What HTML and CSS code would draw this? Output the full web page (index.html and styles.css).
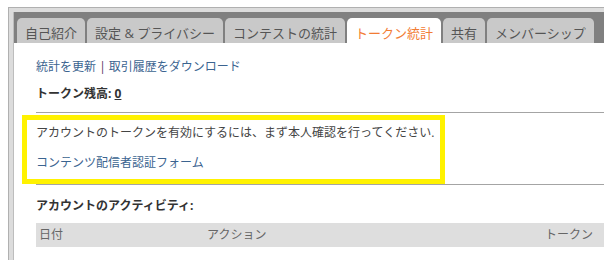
FILE: index.html
```html
<!DOCTYPE html>
<html lang="ja">
<head>
<meta charset="utf-8">
<link rel="stylesheet" href="styles.css">
</head>
<body>
<div class="frame">
  <div class="panel">
    <div class="tabbar">
      <div class="tab">自己紹介</div>
      <div class="tab">設定 &amp; プライバシー</div>
      <div class="tab">コンテストの統計</div>
      <div class="tab active">トークン統計</div>
      <div class="tab">共有</div>
      <div class="tab">メンバーシップ</div>
    </div>
    <div class="content">
      <div class="links"><a href="#">統計を更新</a> <span class="sep">|</span> <a href="#">取引履歴をダウンロード</a></div>
      <div class="balance">トークン残高: <a href="#" class="num">0</a></div>
      <div class="notice">
        <div class="hl">
          <p class="msg">アカウントのトークンを有効にするには、まず本人確認を行ってください.</p>
          <p class="msg gap"><a href="#">コンテンツ配信者認証フォーム</a></p>
        </div>
      </div>
      <div class="activity">アカウントのアクティビティ:</div>
      <div class="thead">
        <div class="th">日付</div>
        <div class="th">アクション</div>
        <div class="th">トークン</div>
      </div>
    </div>
  </div>
</div>
</body>
</html>
```

FILE: styles.css
```css
html, body {
  margin: 0;
  padding: 0;
  background: #fff;
  overflow: hidden;
}
body {
  padding: 7px 0 0 8px;
  font-family: "Open Sans", "Noto Sans CJK JP", sans-serif;
  color: #444;
  width: 596px;
  height: 253px;
}
.frame {
  box-sizing: border-box;
  width: 596px;
  height: 253px;
  border: 1px solid #b0b0b0;
  border-right: none;
  border-bottom: none;
  background: #dcdcdc;
  padding: 4px 0 0 4px;
}
.panel {
  background: #fff;
  height: 100%;
  border-left: 1px solid #bdbdbd;
}
.tabbar {
  display: flex;
  gap: 2px;
  background: #808080;
  padding: 6px 0 0 3px;
  height: 25px;
}
.tab {
  background: #c9c9c9;
  color: #555;
  font-size: 13px;
  line-height: 18px;
  padding: 6px 8px 1px;
  border-radius: 5px 5px 0 0;
  white-space: nowrap;
}
.tab.active {
  background: #fff;
  color: #f27c34;
}
.content {
  padding: 15px 0 0 22px;
  font-size: 12px;
  line-height: 18px;
}
a {
  color: #3b6490;
  text-decoration: none;
}
.sep {
  color: #5b2f63;
}
.balance {
  margin-top: 9px;
  font-weight: bold;
  color: #333;
}
.balance .num {
  color: #333;
  text-decoration: underline;
}
.notice {
  margin-top: 9px;
  border-top: 1px solid #a4a4a4;
  border-bottom: 1px solid #a4a4a4;
  padding-top: 2px;
}
.hl {
  margin-left: -14px;
  width: 404px;
  border: 5px solid #fff200;
  padding: 4px 0 7px 9px;
}
.msg {
  margin: 0;
}
.msg.gap {
  margin-top: 12px;
}
.activity {
  margin-top: 12px;
  font-weight: bold;
  color: #333;
}
.thead {
  margin-top: 8px;
  display: grid;
  grid-template-columns: 168px 338px 1fr;
  background: #dedede;
  height: 24px;
  align-items: center;
  color: #666;
}
.th {
  padding-left: 3px;
}
```
